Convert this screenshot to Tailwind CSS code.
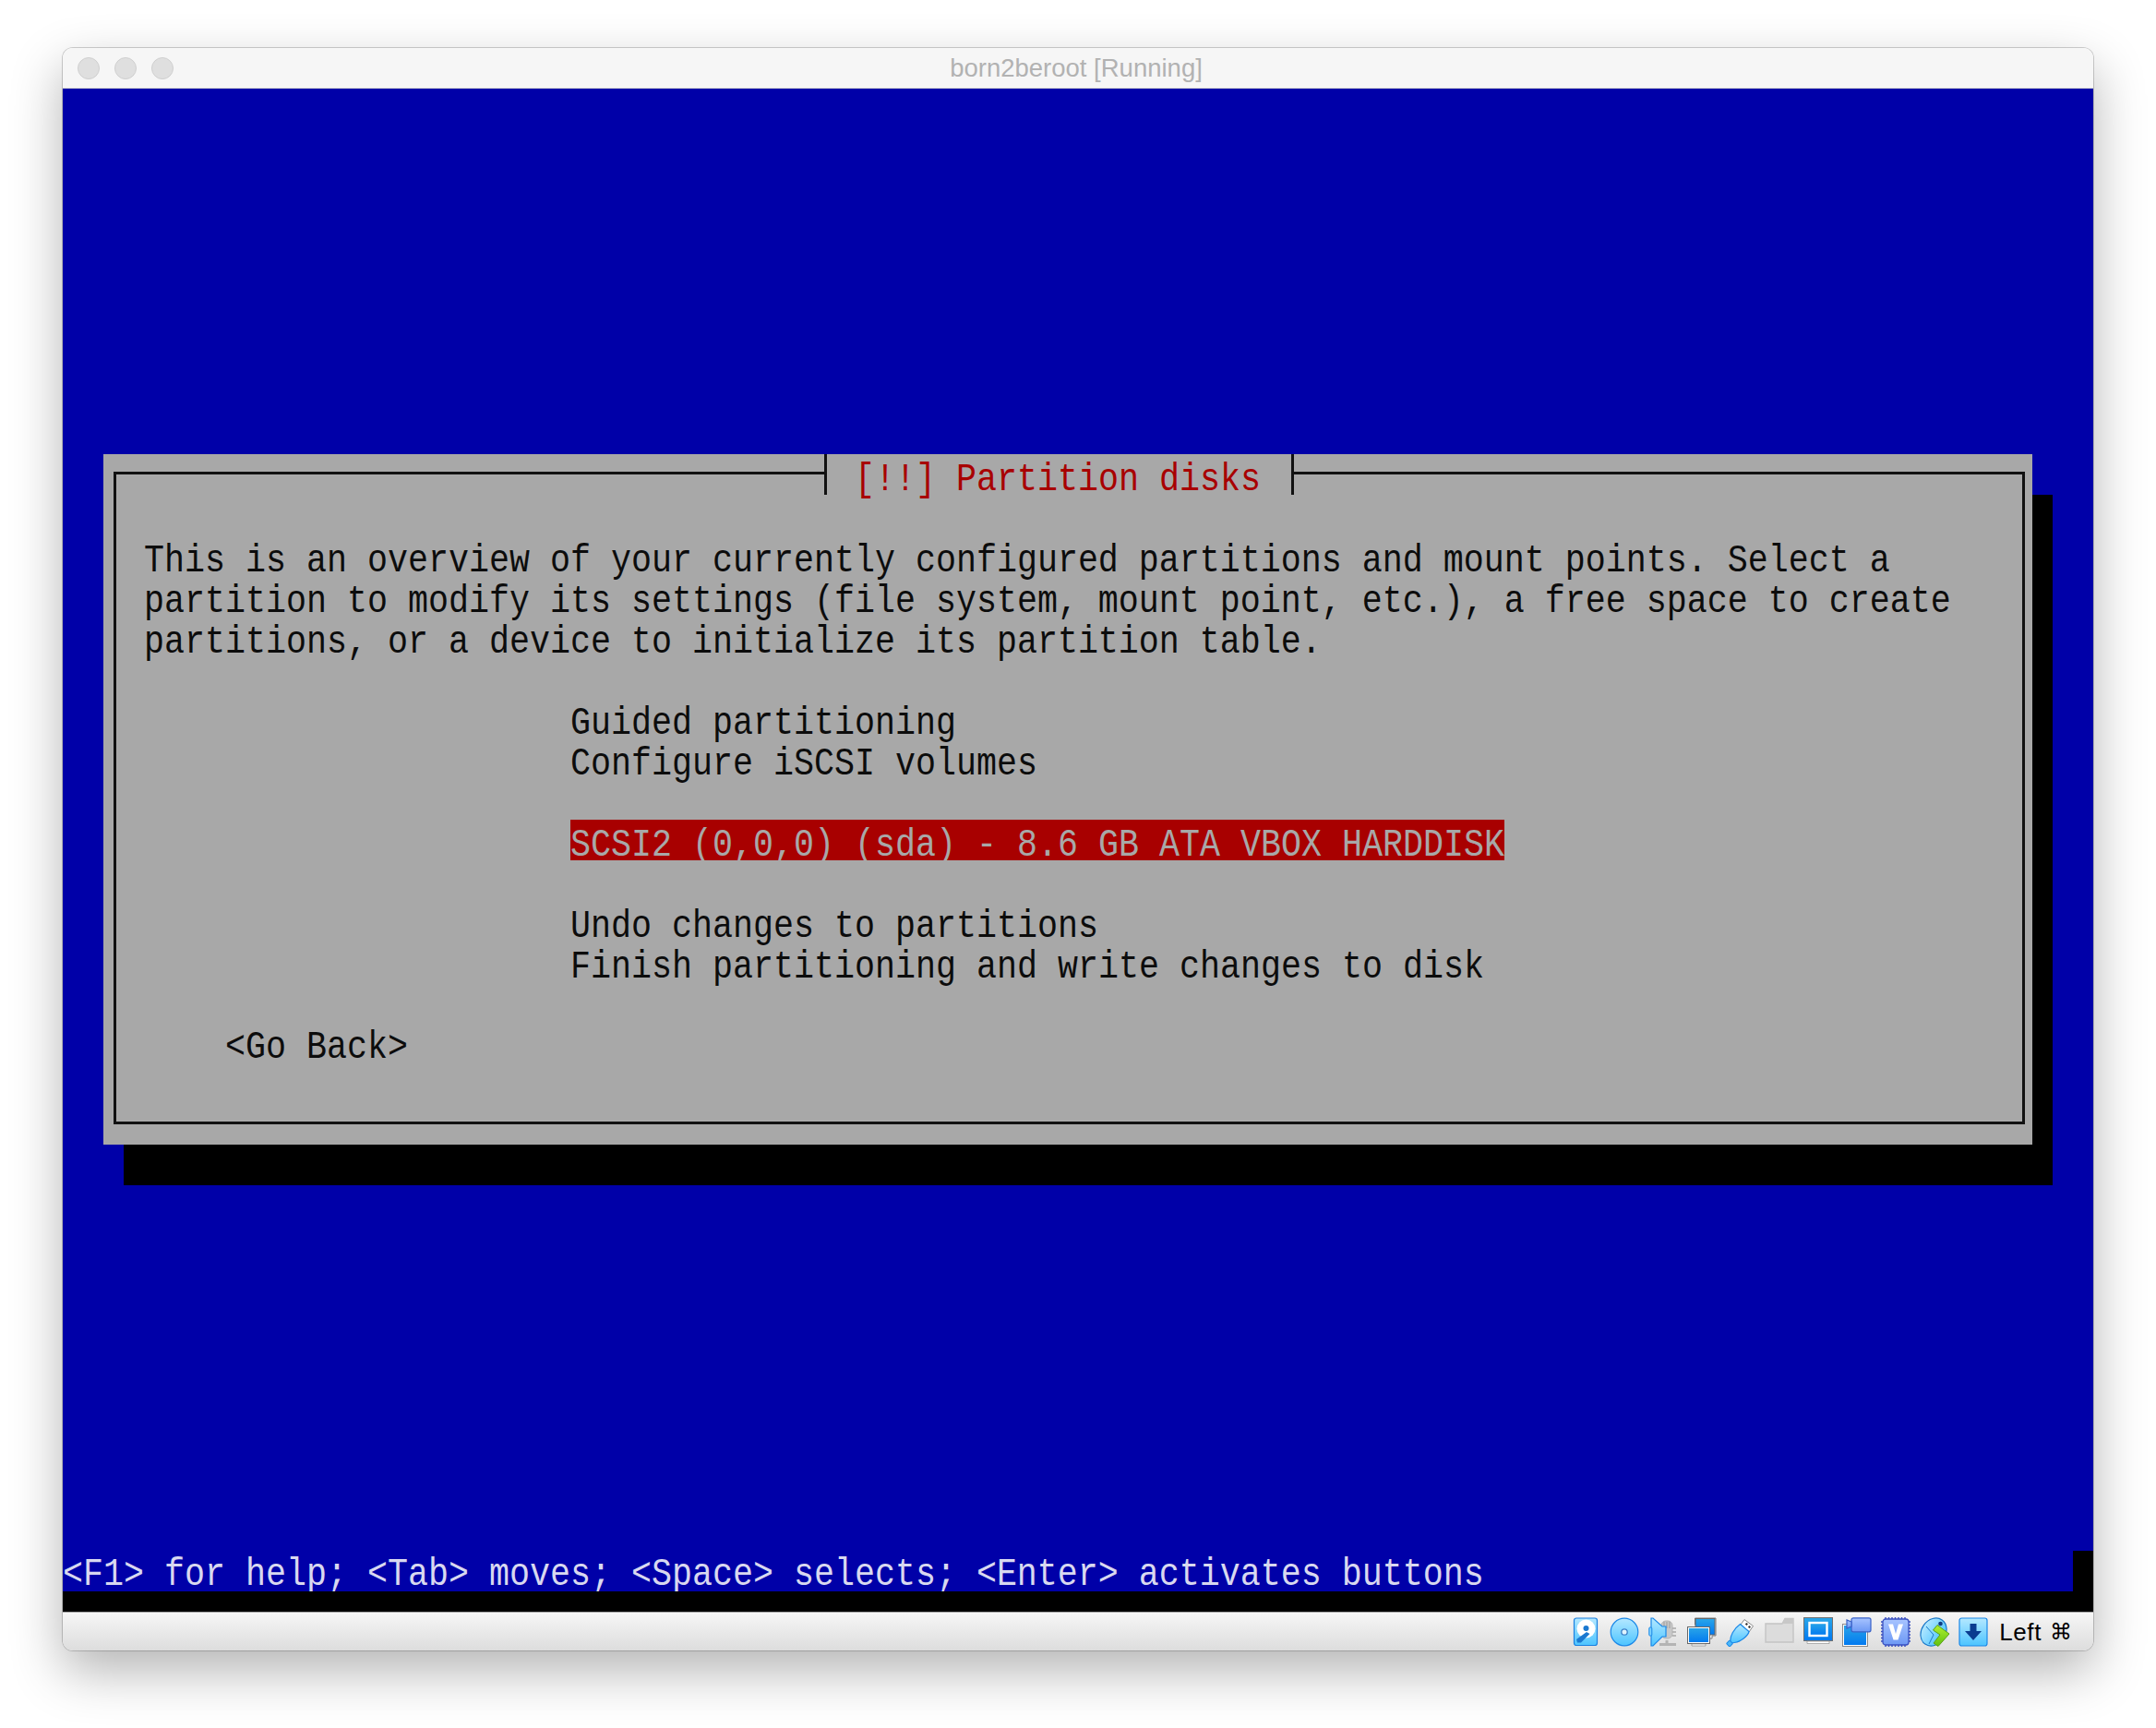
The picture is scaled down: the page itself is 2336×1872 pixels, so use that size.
<!DOCTYPE html>
<html>
<head>
<meta charset="utf-8">
<script src="https://cdn.jsdelivr.net/npm/@tailwindcss/browser@4"></script>
<title>born2beroot [Running]</title>
</head>
<body class="bg-white w-[2336px] h-[1872px] overflow-hidden pt-[52px] pl-[68px]">
<div class="w-[2200px] h-[1736px] rounded-[11px] overflow-hidden flex flex-col shadow-[0_22px_56px_rgba(0,0,0,0.3),0_0_0_1px_rgba(0,0,0,0.18)]">
  <!-- title bar -->
  <div class="relative h-[44px] shrink-0 bg-[#f6f6f6] border-b border-[#d4d4d4] flex items-center pl-[16px] gap-[16px]">
    <span class="w-[24px] h-[24px] rounded-full bg-[#dfdfdf] border border-[#cfcfcf]"></span>
    <span class="w-[24px] h-[24px] rounded-full bg-[#dfdfdf] border border-[#cfcfcf]"></span>
    <span class="w-[24px] h-[24px] rounded-full bg-[#dfdfdf] border border-[#cfcfcf]"></span>
    <div class="absolute inset-0 flex items-center justify-center pr-[4px] pt-[1px] text-[27.5px] text-[#b2b2b2] font-['Liberation_Sans',sans-serif]">born2beroot [Running]</div>
  </div>
  <!-- console -->
  <div class="h-[1650px] shrink-0 flex flex-col bg-black font-['Liberation_Mono',monospace] text-[36.67px] leading-[44px] whitespace-nowrap">
    <div class="h-[1584px] bg-[#0000a8] pt-[396px] pl-[44px]">
      <div class="relative w-[2090px] h-[748px] bg-[#a8a8a8] shadow-[22px_44px_0_#000] pt-[88px] pl-[44px] text-[#0c0c0c]">
        <div class="absolute left-[11px] top-[19px] w-[2071px] h-[707px] border-[3px] border-[#111]"></div>
        <div class="absolute left-[781px] top-0 w-[509px] h-[44px] bg-[#a8a8a8] border-x-[3px] border-[#111] pl-[30px] text-[#a80000]"><span class="block scale-y-[1.15] translate-y-[5px]">[!!] Partition disks</span></div>
        <div class="relative">
          <div class="scale-y-[1.15] translate-y-[5px]">This is an overview of your currently configured partitions and mount points. Select a</div>
          <div class="scale-y-[1.15] translate-y-[5px]">partition to modify its settings (file system, mount point, etc.), a free space to create</div>
          <div class="scale-y-[1.15] translate-y-[5px]">partitions, or a device to initialize its partition table.</div>
          <div class="h-[44px]"></div>
          <div class="pl-[462px] scale-y-[1.15] translate-y-[5px]">Guided partitioning</div>
          <div class="pl-[462px] scale-y-[1.15] translate-y-[5px]">Configure iSCSI volumes</div>
          <div class="h-[44px]"></div>
          <div class="pl-[462px]"><div class="w-[1012px] h-[44px] bg-[#a80000] text-[#a8a8a8]"><span class="block scale-y-[1.15] translate-y-[5px]">SCSI2 (0,0,0) (sda) - 8.6 GB ATA VBOX HARDDISK</span></div></div>
          <div class="h-[44px]"></div>
          <div class="pl-[462px] scale-y-[1.15] translate-y-[5px]">Undo changes to partitions</div>
          <div class="pl-[462px] scale-y-[1.15] translate-y-[5px]">Finish partitioning and write changes to disk</div>
          <div class="h-[44px]"></div>
          <div class="pl-[88px] scale-y-[1.15] translate-y-[5px]">&lt;Go Back&gt;</div>
        </div>
      </div>
    </div>
    <div class="h-[44px] flex">
      <div class="flex-1 bg-[#0000a8] text-[#d8d8f0] overflow-hidden"><span class="block scale-y-[1.15] translate-y-[4px]">&lt;F1&gt; for help; &lt;Tab&gt; moves; &lt;Space&gt; selects; &lt;Enter&gt; activates buttons</span></div>
      <div class="w-[22px] bg-black"></div>
    </div>
    <div class="h-[22px] bg-black"></div>
  </div>
  <!-- status bar -->
  <div class="flex-1 border-t border-[#a6a6a6] bg-gradient-to-b from-[#f6f6f6] to-[#dddddd] flex items-start justify-end pt-[5px] pr-[23px] gap-[10px]">
    <svg class="w-[32px] h-[32px]" viewBox="0 0 32 32">
      <defs>
        <linearGradient id="lb" x1="0" y1="0" x2="0" y2="1"><stop offset="0" stop-color="#b4e8ff"/><stop offset="1" stop-color="#4cc4ff"/></linearGradient>
        <linearGradient id="db" x1="0" y1="0" x2="0" y2="1"><stop offset="0" stop-color="#2aa6e8"/><stop offset="1" stop-color="#0078f0"/></linearGradient>
        <linearGradient id="vb" x1="0" y1="0" x2="0" y2="1"><stop offset="0" stop-color="#a8c4ff"/><stop offset="1" stop-color="#6c98f4"/></linearGradient>
        <linearGradient id="gr" x1="0" y1="0" x2="0" y2="1"><stop offset="0" stop-color="#b0f030"/><stop offset="1" stop-color="#60c010"/></linearGradient>
      </defs>
      <rect x="3.5" y="1" width="25" height="29.5" rx="2.5" fill="url(#lb)" stroke="#1a80e0" stroke-width="1.2"/>
      <circle cx="16.5" cy="12.5" r="10" fill="#fff"/>
      <circle cx="16.5" cy="12" r="3" fill="#1a78d0"/>
      <path d="M7 27.5 L6 24 L17 16 L20.5 18 L11 27.5Z" fill="#1a78d0"/>
    </svg>
    <svg class="w-[32px] h-[32px]" viewBox="0 0 32 32">
      <circle cx="16" cy="16" r="14.8" fill="url(#lb)" stroke="#1a88e8" stroke-width="1.2"/>
      <circle cx="16" cy="16" r="3.2" fill="#dff3ff" stroke="#3a80c8" stroke-width="1.3"/>
    </svg>
    <svg class="w-[32px] h-[32px]" viewBox="0 0 32 32">
      <rect x="14" y="4" width="12" height="19" rx="5" fill="#c8c8c8" stroke="#b4b4b4"/>
      <path d="M17 5v7M20 5v7M23 5v7M26 12h4M26 16h4M26 20h4" stroke="#a8a8a8" stroke-width="1.4"/>
      <path d="M20 25v3M12 29.5h18" stroke="#b4b4b4" stroke-width="3"/>
      <path d="M3 1 L3 31 L5 31 L15 21 L19 21 L19 10 L15 10 L5 1Z" fill="url(#lb)" stroke="#1a88e8" stroke-width="1.2"/>
      <rect x="0.8" y="11" width="3" height="9" rx="1" fill="#7fd4ff" stroke="#1a88e8"/>
    </svg>
    <svg class="w-[32px] h-[32px]" viewBox="0 0 32 32">
      <path d="M8.5 1 H31 V20 H27 V23 H24 V8 H8.5Z" fill="#fff" stroke="#7a7a7a"/>
      <rect x="9" y="1.5" width="21" height="17.5" fill="url(#db)" stroke="#666" stroke-width="1"/>
      <rect x="1" y="11" width="23" height="17" fill="url(#db)" stroke="#fff" stroke-width="2"/>
      <rect x="0.5" y="10.5" width="24" height="18" fill="none" stroke="#666" stroke-width="1"/>
      <path d="M5 29h15v2H5z" fill="#fff" stroke="#888" stroke-width="0.7"/>
    </svg>
    <svg class="w-[32px] h-[32px]" viewBox="0 0 32 32">
      <path d="M20 2.5 L29.5 9.5 L25 16 L16 8Z" fill="#fff" stroke="#8a8a8a"/>
      <rect x="21.5" y="6" width="2.2" height="2.2" fill="#333" transform="rotate(40 22 7)"/>
      <rect x="24.6" y="9" width="2.2" height="2.2" fill="#333" transform="rotate(40 25 10)"/>
      <path d="M15.5 7.5 L25 15.5 C 24 20 16 27 9 27.5 L5 28 C 3.5 21 9 12 15.5 7.5Z" fill="url(#lb)" stroke="#1a88e8" stroke-width="1.2"/>
      <rect x="1.5" y="26" width="5" height="5" rx="1" fill="#4cb8f8" stroke="#1a88e8" transform="rotate(45 4 28.5)"/>
    </svg>
    <svg class="w-[32px] h-[32px]" viewBox="0 0 32 32">
      <path d="M1 7 H19 L22 1.5 H31 V27 H1Z" fill="#dcdcdc" stroke="#c4c4c4" stroke-width="1.4"/>
      <path d="M22 1.5 H31 V7 H19Z" fill="#c8c8c8"/>
    </svg>
    <svg class="w-[32px] h-[32px]" viewBox="0 0 32 32">
      <rect x="0.5" y="0.5" width="31" height="25" fill="url(#db)" stroke="#707070"/>
      <rect x="6.5" y="6" width="19" height="14" fill="url(#db)" stroke="#fff" stroke-width="2.4"/>
      <path d="M4 26h24v2.5H4z" fill="#fff" stroke="#909090" stroke-width="0.7"/>
    </svg>
    <svg class="w-[32px] h-[32px]" viewBox="0 0 32 32">
      <rect x="1" y="8" width="26" height="23" fill="url(#db)" stroke="#fff" stroke-width="2"/>
      <rect x="0.5" y="7.5" width="27" height="24" fill="none" stroke="#8a8a8a"/>
      <rect x="10" y="0.8" width="21" height="15" rx="2" fill="url(#vb)" stroke="#3a62c8" stroke-width="1.2"/>
      <path d="M10 5 L5 3 V12 L10 10Z" fill="url(#vb)" stroke="#3a62c8" stroke-width="1.2"/>
    </svg>
    <svg class="w-[32px] h-[32px]" viewBox="0 0 32 32">
      <path d="M5 0v32M8.500 0v32M12 0v32M15.500 0v32M19 0v32M22.500 0v32M26 0v32M0 5h32M0 8.500h32M0 12h32M0 15.500h32M0 19h32M0 22.500h32M0 26h32" stroke="#3a50c0" stroke-width="1.5"/>
      <rect x="2" y="2" width="28" height="28" rx="3" fill="url(#vb)" stroke="#3a50c0" stroke-width="1.3"/>
      <path d="M8 7.500 H13 L16 18 L19 7.500 H24 L18.500 24.500 H13.500Z" fill="#fff"/>
    </svg>
    <svg class="w-[32px] h-[32px]" viewBox="0 0 32 32">
      <ellipse cx="15" cy="16" rx="16" ry="13" transform="rotate(-55 15 16)" fill="url(#lb)" stroke="#1a78c8" stroke-width="1.2"/>
      <path d="M7 10 L15 19 M15 19 L10 29" stroke="#1a78c8" stroke-width="1" fill="none"/>
      <circle cx="22.500" cy="7" r="2.300" fill="#123a80"/>
      <path d="M19 8.500 L32 18 L20 31.500 L15 28 L22 19 L14.500 14Z" fill="url(#gr)" stroke="#5aa018" stroke-width="1"/>
    </svg>
    <svg class="w-[32px] h-[32px]" viewBox="0 0 32 32">
      <rect x="1" y="1" width="30" height="30" rx="2.500" fill="url(#lb)" stroke="#1a88e8" stroke-width="1.2"/>
      <path d="M12.500 7 H19.500 V15 H25 L16 25 L7 15 H12.500Z" fill="#0a3c90"/>
    </svg>
    <div class="ml-[2px] h-[32px] flex items-center gap-[9px] text-[26px] text-black font-['Liberation_Sans',sans-serif]">
      <span class="tracking-[0.6px]">Left</span><span class="font-['DejaVu_Sans',sans-serif] text-[24px]">⌘</span>
    </div>
  </div>
</div>
</body>
</html>
